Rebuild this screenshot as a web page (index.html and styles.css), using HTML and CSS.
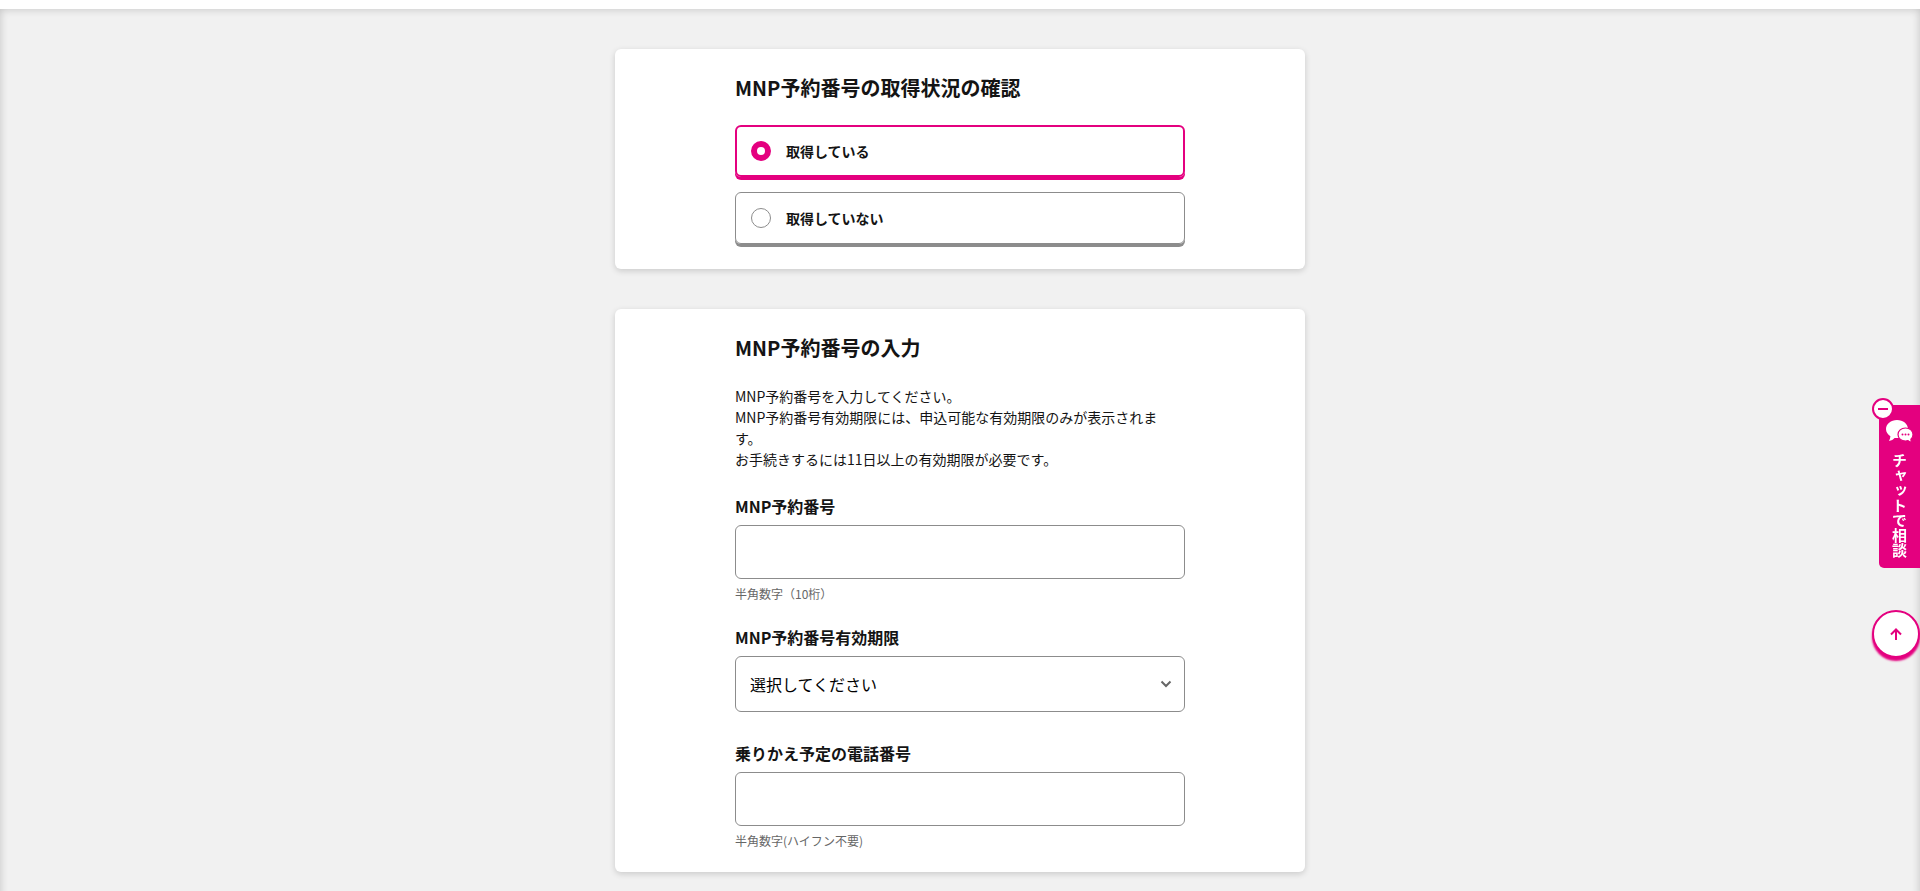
FILE: index.html
```html
<!DOCTYPE html>
<html lang="ja">
<head>
  <meta charset="UTF-8">
  <title>MNP予約番号の入力</title>
  <meta name="viewport" content="width=device-width, initial-scale=1.0">
  <link rel="stylesheet" href="styles.css">
</head>
<body>
  <main>
    <form>
      <section class="card">
        <h2 id="statusTitle">MNP予約番号の取得状況の確認</h2>
        <div class="radio-group" role="radiogroup" aria-labelledby="statusTitle">
          <label class="radio-item">
            <input type="radio" name="mnpStatus" value="yes" checked>
            <span>取得している</span>
          </label>
          <label class="radio-item">
            <input type="radio" name="mnpStatus" value="no">
            <span>取得していない</span>
          </label>
        </div>
      </section>

      <section class="card">
        <h2>MNP予約番号の入力</h2>
        <p class="lead">MNP予約番号を入力してください。<br>MNP予約番号有効期限には、申込可能な有効期限のみが表示されます。<br>お手続きするには11日以上の有効期限が必要です。</p>

        <div class="field">
          <label for="mnpNumber">MNP予約番号</label>
          <input type="text" id="mnpNumber" inputmode="numeric" maxlength="10">
          <p class="hint">半角数字（10桁）</p>
        </div>

        <div class="field">
          <label for="mnpLimit">MNP予約番号有効期限</label>
          <div class="select-wrap">
            <select id="mnpLimit">
              <option>選択してください</option>
            </select>
            <svg viewBox="0 0 12 8" width="12" height="8" aria-hidden="true"><path d="M1.500 1.500 6 6l4.500-4.500" fill="none" stroke="#666" stroke-width="2"/></svg>
          </div>
        </div>

        <div class="field">
          <label for="phoneNumber">乗りかえ予定の電話番号</label>
          <input type="tel" id="phoneNumber">
          <p class="hint">半角数字(ハイフン不要)</p>
        </div>
      </section>
    </form>
  </main>

  <div class="chat">
    <button type="button" class="chat-close" aria-label="閉じる"></button>
    <a href="#chat" class="chat-link">
      <svg viewBox="0 0 28 23" width="28" height="23" aria-hidden="true">
        <path d="M11 0C4.900 0 0 4 0 9c0 3 1.700 5.500 4.400 7.200-.1 1.800-.6 3.300-1.400 4.800 2.400-.5 4.300-1.600 5.600-3.100.8.100 1.600.2 2.400.2 6.100 0 11-4 11-9.100S17.100 0 11 0z" fill="#fff"/>
        <path d="M19.500 8c-4.400 0-7.500 2.900-7.500 6.500s3.100 6.500 7.500 6.500c.9 0 1.700-.1 2.500-.4 1 .9 2.200 1.400 3.700 1.700-.5-.9-.8-1.900-.8-3 1.400-1.200 2.100-2.800 2.100-4.800 0-3.600-3.100-6.500-7.500-6.500z" fill="#fff" stroke="#e4007f" stroke-width="1.200"/>
        <g fill="#e4007f"><circle cx="16.500" cy="14.500" r="1"/><circle cx="19.500" cy="14.500" r="1"/><circle cx="22.500" cy="14.500" r="1"/></g>
      </svg>
      <span>チャットで相談</span>
    </a>
  </div>

  <a href="#" class="page-top" aria-label="ページの先頭へ">
    <svg viewBox="0 0 12 12" width="12" height="12" aria-hidden="true"><path d="M6 12V1.500M1 6.500l5-5 5 5" fill="none" stroke="#e4007f" stroke-width="2"/></svg>
  </a>
</body>
</html>
```

FILE: styles.css
```css
:root {
  --pink: #e4007f;
  --gray: #8c8c8c;
  --text-color: #141414;
}

* {
  box-sizing: border-box;
}

body {
  margin: 0;
  padding-top: 9px;
  background: #fff;
  color: var(--text-color);
  font-family: "Noto Sans CJK JP", sans-serif;
  font-size: 14px;
  line-height: 21px;
}

main {
  display: flow-root;
  padding: 40px 16px 0;
  background: #f1f1f1;
  box-shadow: inset 0 0 8px rgba(0, 0, 0, 0.2);
}

.card {
  max-width: 690px;
  margin: 0 auto 40px;
  padding: 24px 120px 0;
  background: #fff;
  border-radius: 6px;
  box-shadow: 0 2px 6px rgba(0, 0, 0, 0.16);
  overflow: hidden;
}

h2 {
  margin: 0 0 22px;
  font-size: 20px;
  line-height: 30px;
}

/* radio buttons */
.radio-group {
  display: flex;
  flex-direction: column;
  gap: 15px;
  padding-bottom: 25px;
}

.radio-item {
  display: flex;
  align-items: center;
  gap: 15px;
  height: 52px;
  padding: 0 15px;
  border: 1px solid var(--gray);
  border-radius: 6px;
  box-shadow: 0 3px 0 var(--gray);
  font-weight: bold;
  cursor: pointer;
}

.radio-item:has(:checked) {
  padding: 0 14px;
  border: 2px solid var(--pink);
  box-shadow: 0 3px 0 var(--pink);
}

.radio-item input {
  appearance: none;
  width: 20px;
  height: 20px;
  margin: 0;
  border: 1px solid var(--gray);
  border-radius: 50%;
  background: #fff;
}

.radio-item input:checked {
  border: 6px solid var(--pink);
}

/* form fields */
.lead {
  margin: 23px 0 24px;
  padding-right: 20px;
}

.field {
  margin-bottom: 22px;
}

.field label {
  display: block;
  margin-bottom: 7px;
  font-size: 16px;
  font-weight: bold;
  line-height: 24px;
}

.field input,
.field select {
  display: block;
  width: 100%;
  height: 54px;
  padding: 0 14px;
  border: 1px solid var(--gray);
  border-radius: 6px;
  background: #fff;
  color: #000;
  font-family: inherit;
  font-size: 16px;
}

.field select {
  appearance: none;
  height: 56px;
}

.select-wrap {
  position: relative;
  margin-bottom: 29px;
}

.select-wrap svg {
  position: absolute;
  top: 24px;
  right: 13px;
  pointer-events: none;
}

.hint {
  margin: 6px 0 0;
  color: #666;
  font-size: 12px;
  line-height: 18px;
}

/* chat tab */
.chat {
  position: fixed;
  top: 405px;
  right: 0;
}

.chat-link {
  display: flex;
  flex-direction: column;
  align-items: center;
  gap: 10px;
  width: 41px;
  height: 163px;
  padding-top: 15px;
  border-radius: 5px 0 0 5px;
  background: var(--pink);
  color: #fff;
  font-size: 15px;
  font-weight: bold;
  text-decoration: none;
}

.chat-link span {
  writing-mode: vertical-rl;
}

.chat-close {
  position: absolute;
  top: -7px;
  left: -7px;
  display: flex;
  align-items: center;
  justify-content: center;
  width: 22px;
  height: 22px;
  padding: 0;
  border: 2px solid var(--pink);
  border-radius: 50%;
  background: #fff;
  cursor: pointer;
}

.chat-close::before {
  content: "";
  width: 10px;
  height: 2px;
  background: var(--pink);
}

.page-top {
  position: fixed;
  top: 610px;
  right: 0;
  display: flex;
  align-items: center;
  justify-content: center;
  width: 48px;
  height: 48px;
  border: 2px solid var(--pink);
  border-radius: 50%;
  background: #fff;
  box-shadow: 0 3px 2px var(--pink);
}
```
